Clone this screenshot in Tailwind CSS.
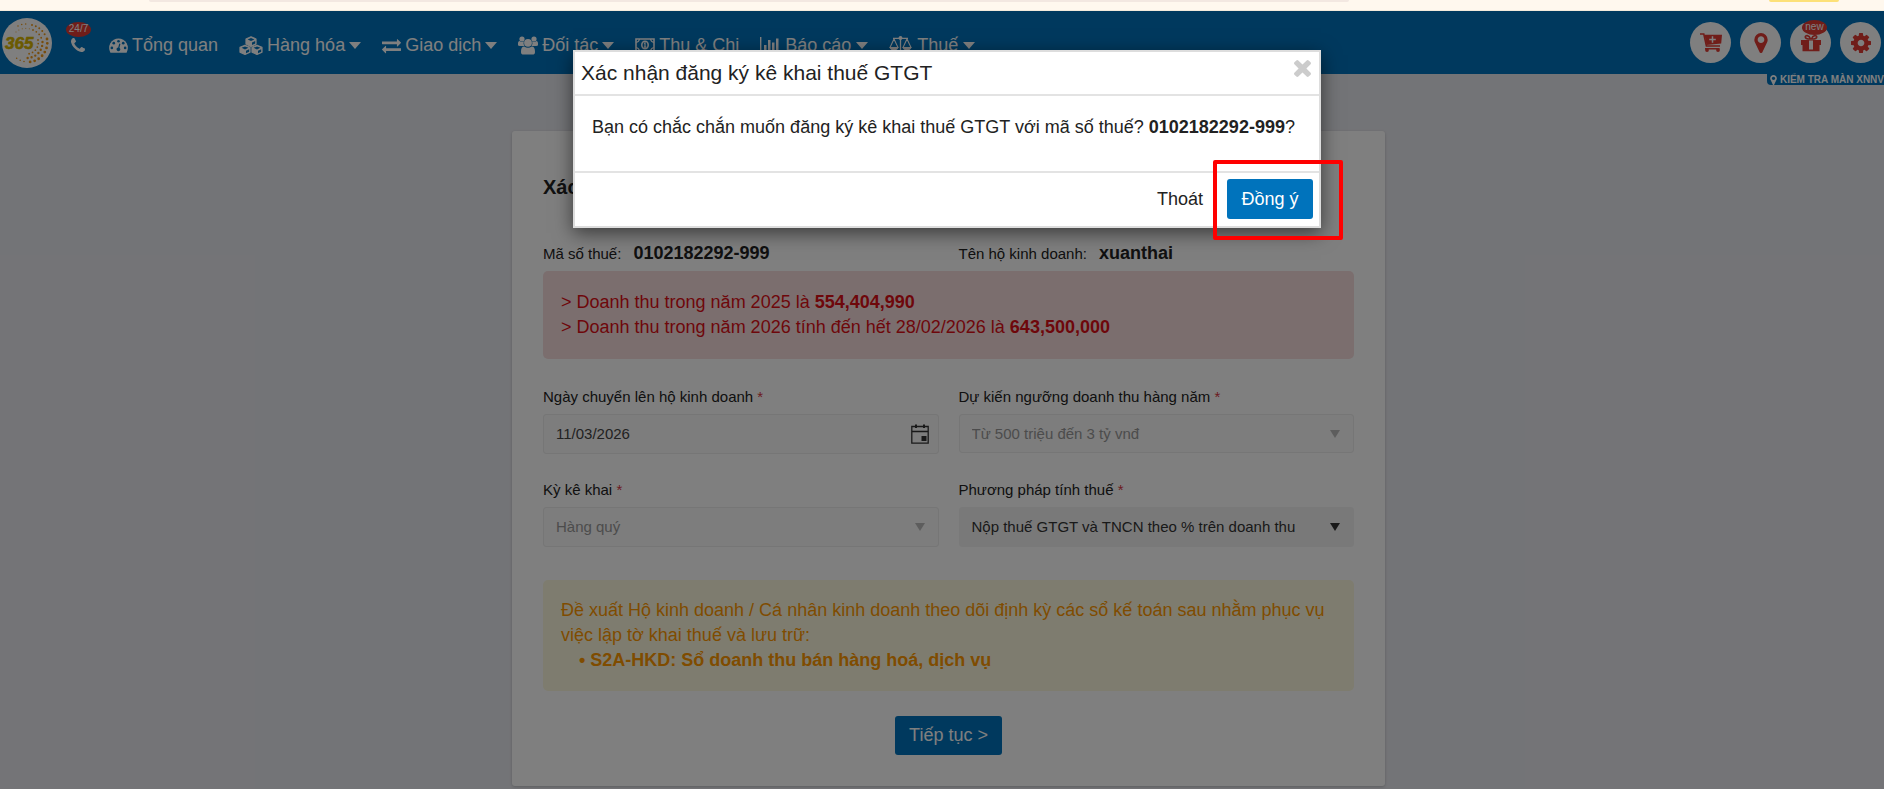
<!DOCTYPE html>
<html lang="vi">
<head>
<meta charset="utf-8">
<title>Xác nhận đăng ký kê khai thuế GTGT</title>
<script src="https://cdn.jsdelivr.net/npm/@tailwindcss/browser@4"></script>
</head>
<body class="h-screen overflow-hidden flex flex-col bg-[#e7e8ee] text-[#222] text-[18px] leading-[25px] font-['Liberation_Sans',Arial,sans-serif]">
<svg class="hidden">
  <symbol id="pin" viewBox="384 128 1024 1536"><path d="M1152 640q0-106-75-181t-181-75-181 75-75 181 75 181 181 75 181-75 75-181zm256 0q0 109-33 179l-364 774q-16 33-47.5 52t-67.5 19-67.5-19-46.5-52l-365-774q-33-70-33-179 0-212 150-362t362-150 362 150 150 362z"/></symbol>
  <symbol id="caret" viewBox="0 0 12 7"><path d="M0 0h12L6 7z"/></symbol>
</svg>

<!-- Browser toolbar edge -->
<div class="h-[11px] shrink-0 bg-[#fff8ee] border-b border-[#f3eadb] flex justify-between items-start pl-[149px] pr-[45px]">
  <div class="h-[2px] w-[1200px] rounded-b bg-[#f3e8e1]"></div>
  <div class="h-[2px] w-[70px] rounded-b bg-[#fde178]"></div>
</div>

<div class="relative flex-1 min-h-0">
  <header class="h-[63px] bg-[#0073bc] text-white flex items-center">
    <a href="#" aria-label="365" class="ml-[2px] shrink-0">
      <svg class="size-[50px]" viewBox="0 0 50 50">
        <circle cx="25" cy="25" r="25" fill="#fff"/>
        <g fill="none" stroke="#f09a1a" stroke-linecap="round">
          <path d="M16 8A20 20 0 0 1 27 6" stroke-width="1.5" stroke-dasharray="0 4"/>
          <path d="M30 7A19.500 19.500 0 0 1 44 19" stroke-width="2" stroke-dasharray="0 4"/>
          <path d="M45 21A19.500 19.500 0 0 1 25 44" stroke-width="2.800" stroke-dasharray="0 4.500"/>
          <path d="M22 43.500A19 19 0 0 1 12 38" stroke-width="1.600" stroke-dasharray="0 4"/>
          <path d="M31 12A15 15 0 0 1 40 22" stroke-width="1.800" stroke-dasharray="0 3.800"/>
          <path d="M40.500 24A15.500 15.500 0 0 1 25 40" stroke-width="2.400" stroke-dasharray="0 4"/>
          <path d="M36 22A11.500 11.500 0 0 1 25 36" stroke-width="1.800" stroke-dasharray="0 3.600"/>
          <path d="M14 14A15 15 0 0 1 28 11" stroke-width="1" stroke-dasharray="0 3.500"/>
        </g>
        <text x="3" y="31" font-family="Liberation Sans" font-size="17" font-weight="bold" font-style="italic" fill="#d6b400" stroke="#d6b400" stroke-width=".6">365</text>
      </svg>
    </a>
    <a href="#" aria-label="Hotline 24/7" class="relative ml-[19px] mt-[4px] shrink-0">
      <svg class="size-[14px]" viewBox="0 0 1408 1408" fill="#fff"><path d="M1408 1112q0 27-10 70.500t-21 68.500q-21 50-122 106-94 51-186 51-27 0-53-3.500t-57-12.500-47-14.500-55.500-20.500-49.500-18q-98-35-175-83-127-79-264-216t-216-264q-48-77-83-175-3-9-18-49.500t-20.500-55.500-14.500-47-12.500-57-3.500-53q0-92 51-186 56-101 106-122 25-11 68.500-21t70.500-10q14 0 21 3 18 6 53 76 11 19 30 54t35 63.500 31 53.500q3 4 17.500 25t21.500 35.500 7 28.500q0 20-28.500 50t-62 55-62 53-28.500 46q0 9 5 22.500t8.500 20.500 14 24 11.500 19q76 137 174 235t235 174q2 1 19 11.500t24 14 20.500 8.500 22.500 5q18 0 46-28.500t53-62 55-62 50-28.500q14 0 28.500 7t35.500 21.500 25 17.500q25 15 53.500 31t63.500 35 54 30q70 35 76 53 3 7 3 21z"/></svg>
      <span class="absolute -top-4 -left-[5px] w-[25px] h-[15px] rounded-[50%] bg-[#e03a33] text-[10px] leading-[14px] text-center">24/7</span>
    </a>
    <nav class="flex-1 flex items-center gap-[21px] ml-6 mt-[5px] whitespace-nowrap leading-[24px]">
      <a href="#" class="flex items-center gap-1">
        <svg class="w-[19px] h-[15px]" viewBox="0 0 20 15"><path fill="#fff" d="M10 0a10 10 0 0 0-8.500 15h17A10 10 0 0 0 10 0z"/><g fill="#0073bc"><circle cx="10" cy="3" r="1.400"/><circle cx="5" cy="5" r="1.400"/><circle cx="15" cy="5" r="1.400"/><circle cx="3" cy="10" r="1.400"/><circle cx="17" cy="10" r="1.400"/><path d="M10.800 5.500l1.200.3-1 4a2 2 0 1 1-1.300-.3z"/></g></svg>
        Tổng quan</a>
      <a href="#" class="flex items-center gap-1">
        <svg class="w-6 h-[19px]" viewBox="0 0 24 19"><g fill="#fff" stroke="#fff" stroke-width="1.200" stroke-linejoin="round"><path d="M12 .8l5 2.200v5l-5 2.400L7 8V3z"/><path d="M6 9.200l5 2.200v4.800l-5 2.200-5-2.200v-4.800z"/><path d="M18 9.200l5 2.200v4.800l-5 2.200-5-2.200v-4.800z"/></g><g fill="#0073bc"><path d="M12 2l3.400 1.400L12 5 8.600 3.400zM13 6.400l3.200-1.500v2.600L13 9zM6 10.400l3.400 1.400L6 13.400l-3.400-1.600zM7 14.800l3.200-1.500v2.400L7 17.200zM18 10.400l3.400 1.400-3.400 1.600-3.400-1.600zM19 14.800l3.200-1.500v2.400L19 17.200z"/></g></svg>
        Hàng hóa <svg class="w-3 h-[7px]" fill="#fff"><use href="#caret"/></svg></a>
      <a href="#" class="flex items-center gap-1">
        <svg class="w-[19px] h-[19px]" viewBox="0 0 1792 1792" fill="#fff"><path d="M1792 1184v192q0 13-9.500 22.500t-22.500 9.500h-1376v192q0 13-9.500 22.500t-22.500 9.500q-12 0-24-10l-319-320q-9-9-9-22 0-14 9-23l320-320q9-9 23-9 13 0 22.500 9.500t9.500 22.500v192h1376q13 0 22.500 9.500t9.500 22.500zm0-544q0 14-9 23l-320 320q-9 9-23 9-13 0-22.500-9.500t-9.500-22.500v-192h-1376q-13 0-22.500-9.500t-9.500-22.500v-192q0-13 9.500-22.500t22.500-9.500h1376v-192q0-14 9-23t23-9q12 0 24 10l319 319q9 9 9 23z"/></svg>
        Giao dịch <svg class="w-3 h-[7px]" fill="#fff"><use href="#caret"/></svg></a>
      <a href="#" class="flex items-center gap-1">
        <svg class="w-5 h-[19px]" viewBox="0 0 20 19" fill="#fff"><circle cx="4" cy="3" r="2.600"/><circle cx="16" cy="3" r="2.600"/><path d="M0 9V7.500C0 6 .6 5 1.600 5q1 .9 2.400.9 1 0 1.800-.4A5 5 0 0 0 6.500 10H2Q0 10 0 9zM20 9V7.500C20 6 19.400 5 18.400 5q-1 .9-2.400.9-1 0-1.800-.4A5 5 0 0 1 13.500 10H18q2 0 2-1z"/><circle cx="10" cy="6.800" r="3.900"/><path d="M3 16c0-3.500.8-5.500 3.300-5.500Q8 11.800 10 11.800t3.700-1.300C16.200 10.500 17 12.500 17 16q0 2.600-2.600 2.600H5.600Q3 18.600 3 16z"/></svg>
        Đối tác <svg class="w-3 h-[7px]" fill="#fff"><use href="#caret"/></svg></a>
      <a href="#" class="flex items-center gap-1">
        <svg class="w-5 h-[14px]" viewBox="0 0 20 14" fill="none" stroke="#fff" stroke-width="1.600"><path d="M1 1h18v12H1z"/><path d="M1 4.500Q4 4 4.500 1M19 4.500Q16 4 15.500 1M1 9.500Q4 10 4.500 13M19 9.500Q16 10 15.500 13" stroke-width="1.200"/><ellipse cx="10" cy="7" rx="3.200" ry="3.800"/><path d="M9 5.500l1-.7V9M8.800 9.200h2.600" stroke-width="1.200"/></svg>
        Thu &amp; Chi</a>
      <a href="#" class="flex items-center gap-[5px]">
        <svg class="w-5 h-[16px]" viewBox="0 0 20 16" fill="#fff"><path d="M0 0h1.400v14.500H20V16H0zM4 8h2.500v5H4zM8 3h2.500v10H8zM12 5.500h2.500V13H12zM16 1.500h2.500V13H16z"/></svg>
        Báo cáo <svg class="w-3 h-[7px]" fill="#fff"><use href="#caret"/></svg></a>
      <a href="#" class="flex items-center gap-[5px]">
        <svg class="w-[23px] h-[19px]" viewBox="0 0 23 19" fill="none" stroke="#fff" stroke-width="1.300"><path d="M4 2.300h15M11.500 1v16.500M6.500 17.800h10"/><circle cx="11.500" cy="2" r="1.300" fill="#fff"/><path d="M5 3L1 11.500h8zM18 3l-4 8.500h8z" stroke-width="1.100"/><path d="M.5 11.500h9Q8.500 14.500 5 14.500T.5 11.500zM13.500 11.500h9q-1 3-4.500 3t-4.500-3z" fill="#fff" stroke="none"/></svg>
        Thuế <svg class="w-3 h-[7px]" fill="#fff"><use href="#caret"/></svg></a>
    </nav>
    <div class="flex gap-[9px] mr-[3px] shrink-0">
      <button aria-label="Giỏ hàng" class="size-[41px] rounded-full bg-white grid place-items-center text-[#e03a33]">
        <svg class="w-[22px] h-[19px]" viewBox="0 0 22 19"><path d="M0 1h3.800l2.600 12h13.600M5 15.800h14.500" fill="none" stroke="currentColor" stroke-width="1.600"/><path d="M4.500 1.800H22l-.8 8.700L6.500 12z" fill="currentColor"/><circle cx="7" cy="17" r="1.900" fill="currentColor"/><circle cx="18" cy="17" r="1.900" fill="currentColor"/><path d="M12.500 3.200v6.600M9.200 6.500h6.600" stroke="#fff" stroke-width="1.500"/></svg>
      </button>
      <button aria-label="Địa điểm" class="size-[41px] rounded-full bg-white grid place-items-center">
        <svg class="w-[14px] h-5" fill="#e03a33"><use href="#pin"/></svg>
      </button>
      <button aria-label="Quà tặng" class="relative size-[41px] rounded-full bg-white grid place-items-center">
        <svg class="w-5 h-[18px]" viewBox="0 0 20 18"><path fill="#e03a33" d="M0 6h20v5h-1.500v6.200h-17V11H0z"/><path d="M9.500 5C7 5 4.300 4.700 4.300 2.900S8 .7 9.500 5zM10.500 5c2.500 0 5.200-.3 5.200-2.100S12 .7 10.500 5z" fill="none" stroke="#e03a33" stroke-width="1.700"/><path d="M8 6.500h4V15.500H8z" fill="#fff"/></svg>
        <span class="absolute -top-[2px] left-3 w-[25px] h-[15px] rounded-[50%] bg-[#e03a33] text-[10px] leading-[13px] text-center">new</span>
      </button>
      <button aria-label="Cài đặt" class="size-[41px] rounded-full bg-white grid place-items-center">
        <svg class="size-5" viewBox="128 128 1536 1536" fill="#e03a33"><path d="M1152 896q0-106-75-181t-181-75-181 75-75 181 75 181 181 75 181-75 75-181zm512-109v222q0 12-8 23t-20 13l-185 28q-19 54-39 91 35 50 107 138 10 12 10 25t-9 23q-27 37-99 108t-94 71q-12 0-26-9l-138-108q-44 23-91 38-16 136-29 186-7 28-36 28h-222q-14 0-24.500-8.500t-11.500-21.500l-28-184q-49-16-90-37l-141 107q-10 9-25 9-14 0-25-11-126-114-165-168-7-10-7-23 0-12 8-23 15-21 51-66.500t54-70.500q-27-50-41-99l-183-27q-13-2-21-12.500t-8-23.500v-222q0-12 8-23t19-13l186-28q14-46 39-92-40-57-107-138-10-12-10-24 0-10 9-23 26-36 98.500-107.500t94.500-71.500q13 0 26 10l138 107q44-23 91-38 16-136 29-186 7-28 36-28h222q14 0 24.500 8.500t11.500 21.500l28 184q49 16 90 37l142-107q9-9 24-9 13 0 25 10 129 119 165 170 7 8 7 22 0 12-8 23-15 21-51 66.500t-54 70.500q26 50 41 98l183 28q13 2 21 12.500t8 23.500z"/></svg>
      </button>
    </div>
  </header>

  <a href="#" class="absolute top-[63px] right-0 h-[11px] pl-[3px] rounded-bl bg-[#0073bc] text-white text-[10px] leading-[11px] font-bold flex items-center gap-[3px] whitespace-nowrap"><svg class="w-[7px] h-[10px] shrink-0" fill="#fff"><use href="#pin"/></svg>KIỂM TRA MÀN XNNV</a>

  <div class="pl-[13px] pt-[57px]">
  <main class="w-[873px] max-w-full mx-auto px-[31px] pb-[31px] bg-white rounded-[3px] shadow-[0_1px_3px_rgba(0,0,0,0.2)]">
    <h1 class="pt-[44px] text-[20px] leading-[24px] font-bold">Xác nhận thông tin</h1>
    <div class="grid grid-cols-2 gap-x-5 mt-[42px] leading-[25px]">
      <p class="flex items-baseline gap-3 text-[15px]">Mã số thuế: <b class="text-[18px]">0102182292-999</b></p>
      <p class="flex items-baseline gap-3 text-[15px]">Tên hộ kinh doanh: <b class="text-[18px]">xuanthai</b></p>
    </div>
    <div class="mt-[5px] rounded-[5px] bg-[#f7dddd] text-[#dd0f16] px-[18px] py-[19px]">
      <p>&gt; Doanh thu trong năm 2025 là <b>554,404,990</b></p>
      <p>&gt; Doanh thu trong năm 2026 tính đến hết 28/02/2026 là <b>643,500,000</b></p>
    </div>
    <form class="grid grid-cols-2 gap-x-5 gap-y-[26px] mt-[28px] text-[15px]">
      <div>
        <label for="ngay" class="block leading-[20px] mb-[7px]">Ngày chuyển lên hộ kinh doanh <span class="text-[#d9363e]">*</span></label>
        <div class="relative">
          <input id="ngay" value="11/03/2026" class="block w-full h-10 rounded-[3px] border border-[#ececec] bg-[#fafafa] px-3 pb-[2px] text-[#444]">
          <svg class="absolute right-[10px] top-[10px] w-[18px] h-[20px]" viewBox="0 0 18 20"><path d="M.8 2.500h16.400v16.700H.8zM.8 7.500h16.400" fill="none" stroke="#333" stroke-width="1.300"/><path d="M4 .5h2v3.500H4zM12 .5h2v3.500h-2zM10.500 12h5v5h-5z" fill="#333"/></svg>
        </div>
      </div>
      <div>
        <label for="nguong" class="block leading-[20px] mb-[7px]">Dự kiến ngưỡng doanh thu hàng năm <span class="text-[#d9363e]">*</span></label>
        <div class="relative">
          <select id="nguong" disabled class="block w-full h-[39px] rounded-[3px] border border-[#ececec] bg-[#fafafa] px-3 text-[#999] appearance-none opacity-100"><option>Từ 500 triệu đến 3 tỷ vnđ</option></select>
          <svg class="absolute right-[14px] top-4 w-[10px] h-2" viewBox="0 0 10 8" fill="#bbb"><path d="M0 0h10L5 8z"/></svg>
        </div>
      </div>
      <div>
        <label for="ky" class="block leading-[20px] mb-[7px]">Kỳ kê khai <span class="text-[#d9363e]">*</span></label>
        <div class="relative">
          <select id="ky" disabled class="block w-full h-10 rounded-[3px] border border-[#ececec] bg-[#fafafa] px-3 pb-[2px] text-[#999] appearance-none opacity-100"><option>Hàng quý</option></select>
          <svg class="absolute right-[14px] top-4 w-[10px] h-2" viewBox="0 0 10 8" fill="#bbb"><path d="M0 0h10L5 8z"/></svg>
        </div>
      </div>
      <div>
        <label for="pp" class="block leading-[20px] mb-[7px]">Phương pháp tính thuế <span class="text-[#d9363e]">*</span></label>
        <div class="relative">
          <select id="pp" class="block w-full h-10 rounded-[3px] border border-[#f3f3f3] bg-[#f3f3f3] px-3 pb-[2px] text-[#333] appearance-none"><option>Nộp thuế GTGT và TNCN theo % trên doanh thu</option></select>
          <svg class="absolute right-[14px] top-4 w-[10px] h-2" viewBox="0 0 10 8" fill="#333"><path d="M0 0h10L5 8z"/></svg>
        </div>
      </div>
    </form>
    <div class="mt-[33px] rounded-[5px] bg-[#fdf9df] text-[#ff9800] px-[18px] py-[18px]">
      <p>Đề xuất Hộ kinh doanh / Cá nhân kinh doanh theo dõi định kỳ các sổ kế toán sau nhằm phục vụ việc lập tờ khai thuế và lưu trữ:</p>
      <p class="pl-[18px] font-bold">• S2A-HKD: Sổ doanh thu bán hàng hoá, dịch vụ</p>
    </div>
    <div class="mt-[25px] flex justify-center"><button class="h-[39px] px-[14px] rounded-[3px] bg-[#0073bc] text-white">Tiếp tục &gt;</button></div>
  </main>
  </div>

  <!-- Modal -->
  <div class="absolute inset-0 bg-black/50"></div>
  <section role="dialog" aria-labelledby="dlg" class="absolute left-[10px] right-0 top-[39px] mx-auto w-[748px] bg-white border-2 border-[#ddd] shadow-[0_5px_18px_rgba(0,0,0,0.55)]">
    <div class="flex justify-between h-[44px] border-b-2 border-[#e3e3e3] pl-[6px] pr-2">
      <h2 id="dlg" class="text-[21px] leading-[42px]">Xác nhận đăng ký kê khai thuế GTGT</h2>
      <button aria-label="Đóng" class="self-start mt-2"><svg class="size-[17px]" viewBox="302 366 1188 1188" fill="#ccc"><path d="M1490 1322q0 40-28 68l-136 136q-28 28-68 28t-68-28l-294-294-294 294q-28 28-68 28t-68-28l-136-136q-28-28-28-68t28-68l294-294-294-294q-28-28-28-68t28-68l136-136q28-28 68-28t68 28l294 294 294-294q28-28 68-28t68 28l136 136q28 28 28 68t-28 68l-294 294 294 294q28 28 28 68z"/></svg></button>
    </div>
    <p class="px-[17px] pt-[19px] pb-[31px]">Bạn có chắc chắn muốn đăng ký kê khai thuế GTGT với mã số thuế? <b>0102182292-999</b>?</p>
    <div class="border-t-2 border-[#e3e3e3] flex justify-end items-center gap-[9px] pt-[6px] pb-[7px] pr-[6px]">
      <button class="h-10 px-[15px]">Thoát</button>
      <button class="h-10 w-[86px] rounded-[3px] bg-[#0073bc] text-white">Đồng ý</button>
    </div>
    <div class="absolute -right-[24px] -bottom-[14px] w-[130px] h-[80px] border-4 border-[#f00] rounded-[2px] pointer-events-none"></div>
  </section>
</div>
</body>
</html>
